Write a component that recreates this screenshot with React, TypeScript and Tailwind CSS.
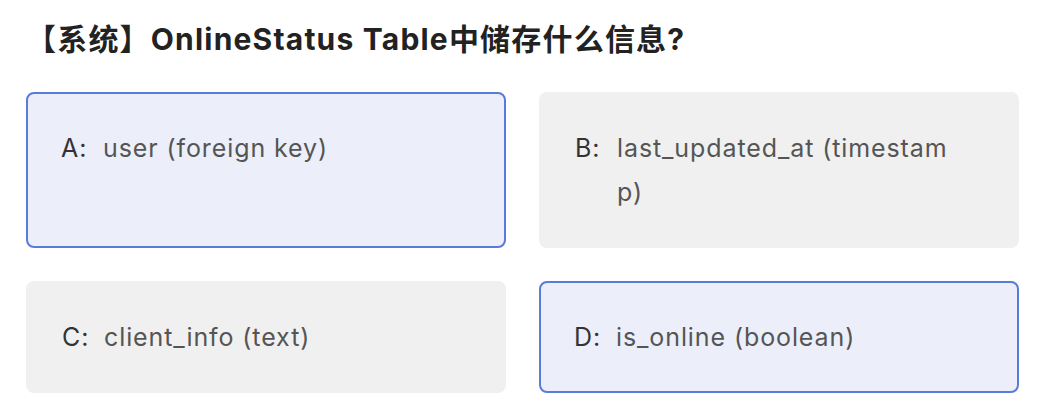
const options = [
  { key: 'A', text: 'user (foreign key)', selected: true },
  { key: 'B', text: 'last_updated_at (timestamp)', selected: false },
  { key: 'C', text: 'client_info (text)', selected: false },
  { key: 'D', text: 'is_online (boolean)', selected: true },
]

export default function App() {
  return (
    <div
      className="w-[1056px] h-[416px] bg-white px-[26px] pt-[17px]"
      style={{ fontFamily: 'Inter, "Noto Sans CJK SC", sans-serif' }}
    >
      <h1 className="text-[30px] leading-[44px] font-bold text-[#222] tracking-[1.2px]">
        【系统】OnlineStatus Table中储存什么信息?
      </h1>

      <div className="mt-[31px] grid grid-cols-[480px_480px] gap-[33px]">
        {options.map((o) => (
          <div
            key={o.key}
            className={
              o.selected
                ? 'flex rounded-[8px] border-2 border-[#5a7bd8] bg-[#eceffa] pl-[33px] pr-[54px] py-[32px]'
                : 'flex rounded-[8px] border-2 border-transparent bg-[#f0f0f0] pl-[34px] pr-[54px] py-[32px]'
            }
          >
            <span className="shrink-0 w-[42px] text-[25px] leading-[44px] tracking-[0.9px] text-[#333]">{o.key}:</span>
            <span className="min-w-0 break-all text-[25px] leading-[44px] tracking-[0.9px] text-[#555]">{o.text}</span>
          </div>
        ))}
      </div>
    </div>
  )
}
